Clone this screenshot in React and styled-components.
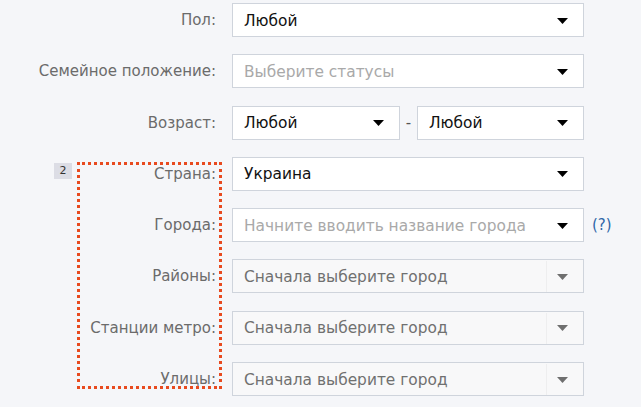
import React from "react";
import styled, { createGlobalStyle } from "styled-components";

const Global = createGlobalStyle`
  html, body { margin: 0; padding: 0; background: #f5f6f9; }
  body { font-family: "DejaVu Sans", "Noto Sans", sans-serif; }
`;

const Form = styled.div`
  display: flex;
  flex-direction: column;
  gap: 17.3px;
  padding-top: 3px;
  width: 641px;
  height: 407px;
  box-sizing: border-box;
  overflow: hidden;
`;

const Group = styled.div`
  position: relative;
  display: flex;
  flex-direction: column;
  gap: 17.3px;
`;

const Row = styled.div`
  display: grid;
  grid-template-columns: 216px 352px auto;
  column-gap: 16px;
  align-items: center;
  height: 34px;
`;

const Label = styled.div`
  text-align: right;
  color: #6b6b6b;
  font-size: 15px;
  white-space: nowrap;
`;

const Pair = styled.div`
  display: flex;
  align-items: center;
`;

const Dash = styled.span`
  width: 17px;
  text-align: center;
  color: #555;
  font-size: 15px;
`;

const Box = styled.div`
  box-sizing: border-box;
  height: 34px;
  width: ${(p) => p.$w || "352px"};
  border: 1px solid #cfd4dc;
  background: ${(p) => (p.$disabled ? "#f8f8f9" : "#ffffff")};
  display: flex;
  align-items: center;
  padding-left: 11px;
  padding-top: 1px;
`;

const Value = styled.span`
  flex: 1;
  font-size: 15.4px;
  color: ${(p) => p.$tone === "placeholder" ? "#a9a9a9" : p.$tone === "disabled" ? "#707070" : "#111"};
  white-space: nowrap;
  overflow: hidden;
`;

const ArrowCell = styled.div`
  width: 30px;
  height: 100%;
  display: flex;
  align-items: center;
  justify-content: center;
  padding-right: 6px;
  border-left: ${(p) => (p.$disabled ? "1px solid #eeeeef" : "none")};
`;

const Help = styled.span`
  color: #2f66a8;
  font-size: 15px;
  margin-left: -8px;
`;

const Dotted = styled.div`
  position: absolute;
  left: 77px;
  top: 5px;
  width: 145px;
  height: 227px;
  box-sizing: border-box;
  border: 3px dotted #e84a1f;
  pointer-events: none;
`;

const Badge = styled.div`
  position: absolute;
  left: 54px;
  top: 6px;
  width: 18px;
  height: 16px;
  background: #dcdde5;
  color: #333;
  font-size: 11px;
  display: flex;
  align-items: center;
  justify-content: center;
`;

function Arrow({ disabled }) {
  return (
    <svg width="11" height="6" viewBox="0 0 11 6">
      <path d="M0 0 L11 0 L5.5 6 Z" fill={disabled ? "#6f6f6f" : "#000"} />
    </svg>
  );
}

function Select({ text, tone, w, disabled }) {
  return (
    <Box $w={w} $disabled={disabled}>
      <Value $tone={tone}>{text}</Value>
      <ArrowCell $disabled={disabled}>
        <Arrow disabled={disabled} />
      </ArrowCell>
    </Box>
  );
}

export default function App() {
  return (
    <>
      <Global />
      <Form>
        <Row>
          <Label>Пол:</Label>
          <Select text="Любой" />
        </Row>
        <Row>
          <Label>Семейное положение:</Label>
          <Select text="Выберите статусы" tone="placeholder" />
        </Row>
        <Row>
          <Label>Возраст:</Label>
          <Pair>
            <Select text="Любой" w="168px" />
            <Dash>-</Dash>
            <Select text="Любой" w="167px" />
          </Pair>
        </Row>
        <Group>
          <Row>
            <Label>Страна:</Label>
            <Select text="Украина" />
          </Row>
          <Row>
            <Label>Города:</Label>
            <Select text="Начните вводить название города" tone="placeholder" />
            <Help>(?)</Help>
          </Row>
          <Row>
            <Label>Районы:</Label>
            <Select text="Сначала выберите город" tone="disabled" disabled />
          </Row>
          <Row>
            <Label>Станции метро:</Label>
            <Select text="Сначала выберите город" tone="disabled" disabled />
          </Row>
          <Row>
            <Label>Улицы:</Label>
            <Select text="Сначала выберите город" tone="disabled" disabled />
          </Row>
          <Dotted />
          <Badge>2</Badge>
        </Group>
      </Form>
    </>
  );
}
